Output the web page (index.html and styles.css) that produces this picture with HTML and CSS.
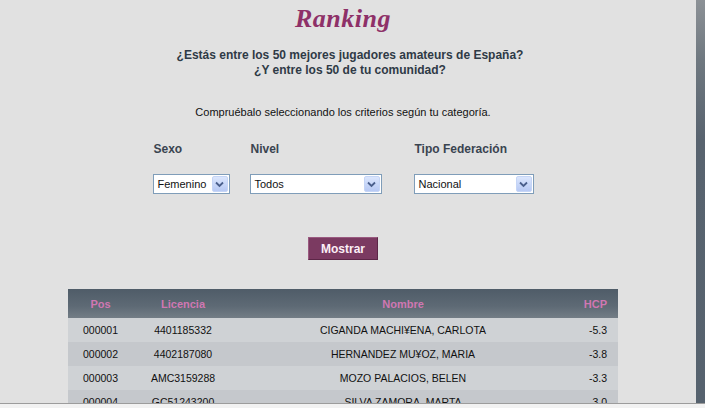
FILE: index.html
```html
<!DOCTYPE html>
<html lang="es">
<head>
    <meta charset="UTF-8">
    <title>Ranking</title>
    <link rel="stylesheet" href="styles.css">
</head>
<body>
    <div class="page">
        <div class="main">
            <div class="content">
                <h1 class="title">Ranking</h1>

                <p class="question">¿Estás entre los 50 mejores jugadores amateurs de España?<br>¿Y entre los 50 de tu comunidad?</p>

                <p class="hint">Compruébalo seleccionando los criterios según tu categoría.</p>

                <div class="filters">
                    <div class="filter filter-sexo">
                        <label>Sexo</label>
                        <div class="select">
                            <span>Femenino</span>
                            <span class="arrow"><svg width="9" height="7" viewBox="0 0 9 7"><path d="M1 1.5 L4.5 5 L8 1.5" fill="none" stroke="#4a5f8c" stroke-width="1.8"/></svg></span>
                        </div>
                    </div>
                    <div class="filter filter-nivel">
                        <label>Nivel</label>
                        <div class="select">
                            <span>Todos</span>
                            <span class="arrow"><svg width="9" height="7" viewBox="0 0 9 7"><path d="M1 1.5 L4.5 5 L8 1.5" fill="none" stroke="#4a5f8c" stroke-width="1.8"/></svg></span>
                        </div>
                    </div>
                    <div class="filter filter-tipo">
                        <label>Tipo Federación</label>
                        <div class="select">
                            <span>Nacional</span>
                            <span class="arrow"><svg width="9" height="7" viewBox="0 0 9 7"><path d="M1 1.5 L4.5 5 L8 1.5" fill="none" stroke="#4a5f8c" stroke-width="1.8"/></svg></span>
                        </div>
                    </div>
                </div>

                <div class="actions">
                    <button class="btn">Mostrar</button>
                </div>

                <table class="ranking">
                    <thead>
                        <tr>
                            <th class="col-pos">Pos</th>
                            <th class="col-lic">Licencia</th>
                            <th class="col-nom">Nombre</th>
                            <th class="col-hcp">HCP</th>
                        </tr>
                    </thead>
                    <tbody>
                        <tr>
                            <td class="col-pos">000001</td>
                            <td class="col-lic">4401185332</td>
                            <td class="col-nom">CIGANDA MACHI¥ENA, CARLOTA</td>
                            <td class="col-hcp">-5.3</td>
                        </tr>
                        <tr>
                            <td class="col-pos">000002</td>
                            <td class="col-lic">4402187080</td>
                            <td class="col-nom">HERNANDEZ MU¥OZ, MARIA</td>
                            <td class="col-hcp">-3.8</td>
                        </tr>
                        <tr>
                            <td class="col-pos">000003</td>
                            <td class="col-lic">AMC3159288</td>
                            <td class="col-nom">MOZO PALACIOS, BELEN</td>
                            <td class="col-hcp">-3.3</td>
                        </tr>
                        <tr>
                            <td class="col-pos">000004</td>
                            <td class="col-lic">GC51243200</td>
                            <td class="col-nom">SILVA ZAMORA, MARTA</td>
                            <td class="col-hcp">-3.0</td>
                        </tr>
                    </tbody>
                </table>
            </div>
        </div>
        <div class="side"></div>
    </div>
    <div class="window-edge"></div>
</body>
</html>
```

FILE: styles.css
```css
html, body {
    margin: 0;
    padding: 0;
    height: 100%;
    overflow: hidden;
}
body {
    background-color: #e1e1e1;
    font-family: "Liberation Sans", Arial, sans-serif;
    color: #222;
}
.page {
    display: flex;
    min-height: 100%;
}
.main {
    flex: 1;
    padding-right: 10px;
}
.side {
    width: 9px;
    background: linear-gradient(to bottom, #8c9196 0px, #6f7880 60px, #58636f 140px, #56626e 100%);
}
.content {
    width: 550px;
    margin: 0 auto;
}
.title {
    margin: 0;
    padding-top: 4px;
    height: 30px;
    text-align: center;
    font-family: "Liberation Serif", "Times New Roman", serif;
    font-style: italic;
    font-weight: bold;
    font-size: 26px;
    line-height: 30px;
    color: #8e3068;
    letter-spacing: 0.5px;
}
.question {
    margin: 14px 0 0 0;
    text-align: center;
    font-size: 12px;
    font-weight: bold;
    line-height: 15px;
    color: #2f3a46;
    padding-left: 14px;
}
.hint {
    margin: 27px 0 0 0;
    text-align: center;
    font-size: 11px;
    line-height: 14px;
    color: #111;
}
.filters {
    display: flex;
    justify-content: center;
    margin-top: 23px;
}
.filter label {
    display: block;
    font-size: 12px;
    font-weight: bold;
    color: #3a4450;
    line-height: 15px;
    padding-left: 1px;
}
.filter-sexo { margin-right: 20px; }
.filter-nivel { margin-right: 32px; }
.filter-sexo .select { width: 77px; }
.filter-nivel .select { width: 132px; }
.filter-tipo .select { width: 120px; }
.select {
    box-sizing: border-box;
    margin-top: 17px;
    height: 20px;
    background: #fff;
    border: 1px solid #7f9db9;
    display: flex;
    align-items: center;
    justify-content: space-between;
    padding: 0 1px 0 4px;
    font-size: 11px;
    color: #111;
}
.arrow {
    width: 16px;
    height: 16px;
    box-sizing: border-box;
    border: 1px solid #c5d5f6;
    border-radius: 2px;
    background: linear-gradient(to bottom, #dbe6fd, #b7c9f4);
    display: flex;
    align-items: center;
    justify-content: center;
}
.actions {
    display: flex;
    justify-content: center;
    margin-top: 43px;
}
.btn {
    width: 70px;
    height: 23px;
    border: 1px solid #9a5a80;
    border-bottom-color: #5c2647;
    border-right-color: #5c2647;
    background-color: #7b3a61;
    color: #fbeef6;
    font-family: "Liberation Sans", Arial, sans-serif;
    font-size: 12px;
    font-weight: bold;
    padding: 0;
    cursor: pointer;
}
.ranking {
    margin-top: 29px;
    width: 550px;
    border-collapse: collapse;
    table-layout: fixed;
    font-size: 11px;
}
.ranking th {
    height: 29px;
    padding: 0;
    background: linear-gradient(to bottom, #4f5c68, #5e6a75 60%, #737d86);
    color: #d077b2;
    font-weight: bold;
    font-size: 11px;
}
.ranking td {
    height: 24px;
    padding: 0;
    font-size: 10.5px;
    color: #111;
}
.ranking tbody tr:nth-child(odd) td { background-color: #cfd2d5; }
.ranking tbody tr:nth-child(even) td { background-color: #c5c8cc; }
.col-pos { width: 65px; text-align: center; }
.col-lic { width: 100px; text-align: center; }
.col-nom { text-align: center; }
.col-hcp { width: 45px; text-align: right; padding-right: 11px !important; box-sizing: border-box; }
.window-edge {
    position: fixed;
    left: 0;
    right: 0;
    bottom: 0;
    height: 4px;
    border-top: 1px solid #9c9c9c;
    background: #f2f2f2;
}
```
